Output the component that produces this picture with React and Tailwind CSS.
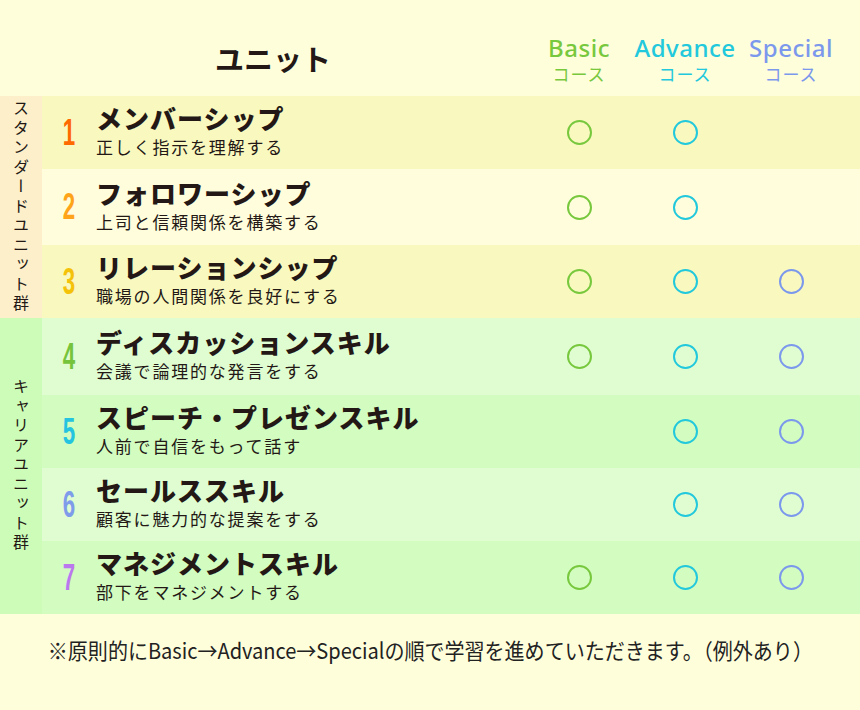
import React from "react";

const JP = "font-['Noto_Sans_CJK_JP','Noto_Sans',sans-serif]";

const rows = [
  { n: "1", nc: "text-[#ff6a00]", t: "メンバーシップ", s: "正しく指示を理解する", bg: "bg-[#f9f8bf]", h: "h-[73px]", c: [1, 1, 0] },
  { n: "2", nc: "text-[#ffa41a]", t: "フォロワーシップ", s: "上司と信頼関係を構築する", bg: "bg-[#fffddb]", h: "h-[76px]", c: [1, 1, 0] },
  { n: "3", nc: "text-[#f5c20a]", t: "リレーションシップ", s: "職場の人間関係を良好にする", bg: "bg-[#f9f8bf]", h: "h-[73px]", c: [1, 1, 1] },
];
const rows2 = [
  { n: "4", nc: "text-[#76c43c]", t: "ディスカッションスキル", s: "会議で論理的な発言をする", bg: "bg-[#e0fdd2]", h: "h-[77px]", c: [1, 1, 1] },
  { n: "5", nc: "text-[#24c4e0]", t: "スピーチ・プレゼンスキル", s: "人前で自信をもって話す", bg: "bg-[#d2fcc0]", h: "h-[73px]", c: [0, 1, 1] },
  { n: "6", nc: "text-[#7e9cea]", t: "セールススキル", s: "顧客に魅力的な提案をする", bg: "bg-[#e0fdd2]", h: "h-[73px]", c: [0, 1, 1] },
  { n: "7", nc: "text-[#bb78ee]", t: "マネジメントスキル", s: "部下をマネジメントする", bg: "bg-[#d2fcc0]", h: "h-[73px]", c: [1, 1, 1] },
];

const circleCls = [
  "border-[#78c83e]",
  "border-[#22c8dc]",
  "border-[#7b98ec]",
];

function Row({ r }) {
  return (
    <div className={`flex items-center ${r.bg} ${r.h}`}>
      <div className="w-[54px] flex justify-center">
        <span className={`inline-block font-['Liberation_Sans',sans-serif] font-bold text-[36px] leading-none scale-x-[0.62] ${r.nc}`}>
          {r.n}
        </span>
      </div>
      <div className="w-[430px] flex flex-col -mt-[4px]">
        <div className={`${JP} font-black text-[26px] leading-[28px] tracking-[1px] text-[#231815] whitespace-nowrap`}>
          {r.t}
        </div>
        <div className={`${JP} mt-[5px] text-[17px] leading-[20px] tracking-[1.8px] text-[#231815] whitespace-nowrap`}>
          {r.s}
        </div>
      </div>
      {r.c.map((v, i) => (
        <div key={i} className="w-[106px] flex justify-center">
          {v ? <div className={`w-[25px] h-[25px] rounded-full border-2 ${circleCls[i]}`} /> : null}
        </div>
      ))}
    </div>
  );
}

function Group({ label, labelBg, items }) {
  return (
    <div className="flex">
      <div className={`w-[42px] flex items-center justify-center ${labelBg}`}>
        <span className={`${JP} [writing-mode:vertical-rl] text-[16px] tracking-[3.5px] leading-none text-[#231815]`}>
          {label}
        </span>
      </div>
      <div className="flex-1 flex flex-col">
        {items.map((r) => (
          <Row key={r.n} r={r} />
        ))}
      </div>
    </div>
  );
}

function CourseHead({ name, color }) {
  return (
    <div className={`w-[106px] flex flex-col items-center ${color}`}>
      <div className="font-['Noto_Sans',sans-serif] font-medium text-[24px] leading-[28px] tracking-[0.5px] whitespace-nowrap">
        {name}
      </div>
      <div className={`${JP} mt-[2px] text-[17px] leading-[20px] tracking-[1px]`}>コース</div>
    </div>
  );
}

export default function App() {
  return (
    <div className="w-[860px] h-[710px] bg-[#fefedb] flex flex-col overflow-hidden">
      <div className="h-[96px] flex items-start pt-[34px]">
        <div className="w-[42px]" />
        <div className="w-[484px] flex justify-center pr-[22px] pt-[7px]">
          <span className={`${JP} font-bold text-[29px] leading-[34px] text-[#231815]`}>ユニット</span>
        </div>
        <CourseHead name="Basic" color="text-[#78c83e]" />
        <CourseHead name="Advance" color="text-[#22c8dc]" />
        <CourseHead name="Special" color="text-[#7b98ec]" />
      </div>
      <Group label="スタンダードユニット群" labelBg="bg-[#fcefca]" items={rows} />
      <Group label="キャリアユニット群" labelBg="bg-[#cdfcb8]" items={rows2} />
      <div className="flex-1 flex items-center justify-center pb-[26px]">
        <span className={`inline-block ${JP} text-[22px] leading-none text-[#222] scale-x-[0.91] whitespace-nowrap`}>
          ※原則的にBasic→Advance→Specialの順で学習を進めていただきます。（例外あり）
        </span>
      </div>
    </div>
  );
}
